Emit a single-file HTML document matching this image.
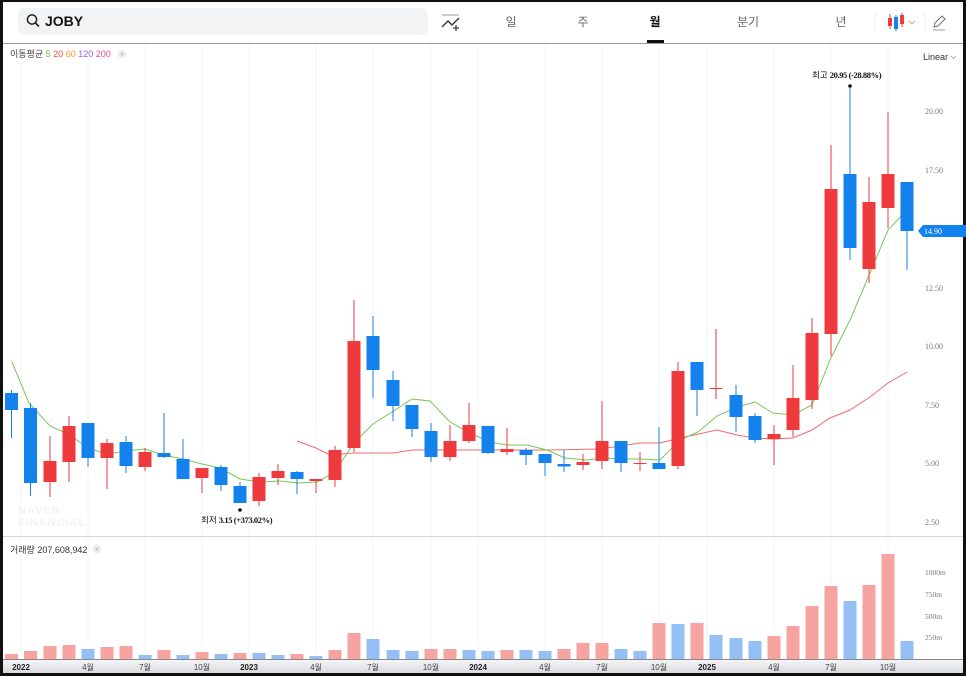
<!DOCTYPE html>
<html><head><meta charset="utf-8">
<style>
html,body{margin:0;padding:0;background:#111;}
body{width:966px;height:676px;overflow:hidden;position:relative;font-family:"Liberation Sans","Noto Sans CJK KR",sans-serif;}
#frame{position:absolute;left:3px;top:2px;width:960px;height:671px;background:#fff;overflow:hidden;}
svg{position:absolute;left:0;top:0;}
</style></head><body>
<div id="frame"></div>
<svg width="966" height="676" viewBox="0 0 966 676" xmlns="http://www.w3.org/2000/svg" font-family="Liberation Sans, Noto Sans CJK KR, sans-serif">
<!-- header -->
<rect x="18" y="8" width="410" height="27" rx="6" fill="#f2f3f5"/>
<circle cx="32" cy="19.5" r="4.6" fill="none" stroke="#222" stroke-width="1.5"/>
<line x1="35.5" y1="23" x2="39" y2="26.5" stroke="#222" stroke-width="1.6"/>
<text x="45" y="26" font-size="14" font-weight="bold" fill="#111">JOBY</text>
<line x1="442" y1="15" x2="459" y2="15" stroke="#999" stroke-width="1"/>
<polyline points="442,27 448,21 452,25 459,18" fill="none" stroke="#333" stroke-width="1.4"/>
<line x1="456" y1="25" x2="456" y2="31" stroke="#333" stroke-width="1.2"/>
<line x1="453" y1="28" x2="459" y2="28" stroke="#333" stroke-width="1.2"/>
<g font-size="12" fill="#666" text-anchor="middle">
<text x="511" y="26">일</text><text x="583" y="26">주</text>
<text x="655" y="26" font-weight="bold" fill="#111">월</text>
<text x="748" y="26">분기</text><text x="841" y="26">년</text></g>
<rect x="647" y="40" width="17" height="3" fill="#111"/>
<line x1="875" y1="12" x2="875" y2="32" stroke="#eee"/>
<line x1="925" y1="12" x2="925" y2="32" stroke="#eee"/>
<line x1="890" y1="14" x2="890" y2="29" stroke="#ef3a3d"/><rect x="888" y="18" width="4" height="8" fill="#ef3a3d"/>
<line x1="896" y1="15" x2="896" y2="31" stroke="#1482ec"/><rect x="894" y="17" width="4" height="12" fill="#1482ec"/>
<line x1="902" y1="13" x2="902" y2="27" stroke="#ef3a3d"/><rect x="900" y="15" width="4" height="9" fill="#ef3a3d"/>
<polyline points="909,21 912,24 915,21" fill="none" stroke="#aaa" stroke-width="0.9"/>
<path d="M934 27 L935 23 L942 16 L945 19 L938 26 Z" fill="none" stroke="#777" stroke-width="1.1"/>
<line x1="933" y1="30" x2="945" y2="30" stroke="#999"/>
<line x1="3" y1="43.5" x2="963" y2="43.5" stroke="#999" stroke-width="1"/>

<!-- grid -->
<g stroke="#f2f3f5" stroke-width="1">
<line x1="21" y1="44" x2="21" y2="660"/><line x1="88" y1="44" x2="88" y2="660"/><line x1="145" y1="44" x2="145" y2="660"/><line x1="202" y1="44" x2="202" y2="660"/><line x1="249" y1="44" x2="249" y2="660"/><line x1="316" y1="44" x2="316" y2="660"/><line x1="373" y1="44" x2="373" y2="660"/><line x1="431" y1="44" x2="431" y2="660"/><line x1="478" y1="44" x2="478" y2="660"/><line x1="545" y1="44" x2="545" y2="660"/><line x1="602" y1="44" x2="602" y2="660"/><line x1="659" y1="44" x2="659" y2="660"/><line x1="707" y1="44" x2="707" y2="660"/><line x1="774" y1="44" x2="774" y2="660"/><line x1="831" y1="44" x2="831" y2="660"/><line x1="888" y1="44" x2="888" y2="660"/>
</g>

<!-- legend -->
<text x="10" y="57" font-size="9" fill="#444">이동평균 <tspan fill="#5cbf3a">5</tspan> <tspan fill="#f04a4a">20</tspan> <tspan fill="#f59a23">60</tspan> <tspan fill="#a05ce0">120</tspan> <tspan fill="#ef4a8a">200</tspan></text>
<circle cx="122" cy="54" r="4.5" fill="#eee"/><text x="122" y="56.5" font-size="7" fill="#aaa" text-anchor="middle">×</text>
<text x="923" y="60" font-size="9" fill="#333">Linear</text>
<polyline points="951,56 953.5,58.5 956,56" fill="none" stroke="#999" stroke-width="0.8"/>

<!-- price axis -->
<g font-size="8" fill="#777" font-family="Liberation Serif, serif">
<text x="925" y="114">20.00</text><text x="925" y="173">17.50</text><text x="925" y="291">12.50</text><text x="925" y="349">10.00</text><text x="925" y="408">7.50</text><text x="925" y="466">5.00</text><text x="925" y="525">2.50</text></g>
<path d="M918 231 L923 225 L966 225 L966 237 L923 237 Z" fill="#1482ec"/>
<text x="924" y="234" font-size="8" fill="#fff" font-family="Liberation Serif, serif">14.90</text>

<!-- watermark -->
<text x="18" y="514" font-size="11" font-weight="bold" fill="#f1f2f4" letter-spacing="1">NAVER</text>
<text x="18" y="526" font-size="11" font-weight="bold" fill="#f1f2f4" letter-spacing="1">FINANCIAL</text>

<!-- MA lines -->
<polyline fill="none" stroke="#f26b6b" stroke-width="1" points="297,441 316,448 330,455 354,453 393,453 412,450 450,450 550,450 600,449 640,443 660,443 680,438 717,430 737,435 755,438 773,439 793,438 812,430 830,418 850,410 870,397 888,383 907,372"/>
<polyline fill="none" stroke="#74c85a" stroke-width="1" points="12,362 29,403 50,426 70,435 88,448 107,454 126,451 145,449 163,455 183,459 202,464 220,468 240,479 260,482 280,481 298,483 317,482 335,472 353,444 373,424 392,412 412,399 430,401 450,422 470,433 490,442 507,445 527,445 547,450 565,458 587,460 603,458 623,459 640,459 660,460 680,440 698,432 717,416 737,407 755,402 773,413 793,415 812,405 830,360 850,320 870,273 888,230 907,210"/>

<!-- candles -->
<g id="c" stroke-width="1"></g>
<g>
<line x1="11.5" y1="390" x2="11.5" y2="438" stroke="#1482ec"/><rect x="5" y="393" width="13" height="17" fill="#1482ec"/>
<line x1="30.5" y1="403" x2="30.5" y2="496" stroke="#1482ec"/><rect x="24" y="408" width="13" height="75" fill="#1482ec"/>
<line x1="50" y1="436" x2="50" y2="497" stroke="#ef3a3d"/><rect x="43.5" y="461" width="13" height="21" fill="#ef3a3d"/>
<line x1="69" y1="416" x2="69" y2="482" stroke="#ef3a3d"/><rect x="62.5" y="426" width="13" height="36" fill="#ef3a3d"/>
<line x1="88" y1="423" x2="88" y2="467" stroke="#1482ec"/><rect x="81.5" y="423" width="13" height="35" fill="#1482ec"/>
<line x1="107" y1="439" x2="107" y2="489" stroke="#ef3a3d"/><rect x="100.5" y="443" width="13" height="15" fill="#ef3a3d"/>
<line x1="126" y1="436" x2="126" y2="473" stroke="#1482ec"/><rect x="119.5" y="442" width="13" height="24" fill="#1482ec"/>
<line x1="145" y1="448" x2="145" y2="471" stroke="#ef3a3d"/><rect x="138.5" y="452" width="13" height="15" fill="#ef3a3d"/>
<line x1="164" y1="413" x2="164" y2="458" stroke="#1482ec"/><rect x="157.5" y="453" width="13" height="4" fill="#1482ec"/>
<line x1="183" y1="439" x2="183" y2="479" stroke="#1482ec"/><rect x="176.5" y="459" width="13" height="20" fill="#1482ec"/>
<line x1="202" y1="468" x2="202" y2="493" stroke="#ef3a3d"/><rect x="195.5" y="468" width="13" height="10" fill="#ef3a3d"/>
<line x1="221" y1="465" x2="221" y2="491" stroke="#1482ec"/><rect x="214.5" y="467" width="13" height="18" fill="#1482ec"/>
<line x1="240" y1="482" x2="240" y2="503" stroke="#1482ec"/><rect x="233.5" y="486" width="13" height="17" fill="#1482ec"/>
<line x1="259" y1="473" x2="259" y2="506" stroke="#ef3a3d"/><rect x="252.5" y="477" width="13" height="24" fill="#ef3a3d"/>
<line x1="278" y1="464" x2="278" y2="485" stroke="#ef3a3d"/><rect x="271.5" y="471" width="13" height="7" fill="#ef3a3d"/>
<line x1="297" y1="471" x2="297" y2="494" stroke="#1482ec"/><rect x="290.5" y="472" width="13" height="7" fill="#1482ec"/>
<line x1="316" y1="479" x2="316" y2="493" stroke="#ef3a3d"/><rect x="309.5" y="479" width="13" height="2" fill="#ef3a3d"/>
<line x1="335" y1="446" x2="335" y2="487" stroke="#ef3a3d"/><rect x="328.5" y="450" width="13" height="30" fill="#ef3a3d"/>
<line x1="354" y1="300" x2="354" y2="452" stroke="#ef3a3d"/><rect x="347.5" y="341" width="13" height="107" fill="#ef3a3d"/>
<line x1="373" y1="316" x2="373" y2="398" stroke="#1482ec"/><rect x="366.5" y="336" width="13" height="34" fill="#1482ec"/>
<line x1="393" y1="371" x2="393" y2="421" stroke="#1482ec"/><rect x="386.5" y="380" width="13" height="26" fill="#1482ec"/>
<line x1="412" y1="405" x2="412" y2="437" stroke="#1482ec"/><rect x="405.5" y="405" width="13" height="24" fill="#1482ec"/>
<line x1="431" y1="423" x2="431" y2="462" stroke="#1482ec"/><rect x="424.5" y="431" width="13" height="26" fill="#1482ec"/>
<line x1="450" y1="425" x2="450" y2="461" stroke="#ef3a3d"/><rect x="443.5" y="441" width="13" height="16" fill="#ef3a3d"/>
<line x1="469" y1="403" x2="469" y2="443" stroke="#ef3a3d"/><rect x="462.5" y="425" width="13" height="16" fill="#ef3a3d"/>
<line x1="488" y1="426" x2="488" y2="454" stroke="#1482ec"/><rect x="481.5" y="426" width="13" height="27" fill="#1482ec"/>
<line x1="507" y1="428" x2="507" y2="455" stroke="#ef3a3d"/><rect x="500.5" y="449" width="13" height="3" fill="#ef3a3d"/>
<line x1="526" y1="448" x2="526" y2="465" stroke="#1482ec"/><rect x="519.5" y="450" width="13" height="5" fill="#1482ec"/>
<line x1="545" y1="454" x2="545" y2="476" stroke="#1482ec"/><rect x="538.5" y="454" width="13" height="9" fill="#1482ec"/>
<line x1="564" y1="450" x2="564" y2="472" stroke="#1482ec"/><rect x="557.5" y="464" width="13" height="2.5" fill="#1482ec"/>
<line x1="583" y1="454" x2="583" y2="470" stroke="#ef3a3d"/><rect x="576.5" y="462" width="13" height="3" fill="#ef3a3d"/>
<line x1="602" y1="401" x2="602" y2="469" stroke="#ef3a3d"/><rect x="595.5" y="441" width="13" height="20" fill="#ef3a3d"/>
<line x1="621" y1="441" x2="621" y2="472" stroke="#1482ec"/><rect x="614.5" y="441" width="13" height="22" fill="#1482ec"/>
<line x1="640" y1="452" x2="640" y2="471" stroke="#ef3a3d"/><rect x="633.5" y="463" width="13" height="1" fill="#ef3a3d"/>
<line x1="659" y1="427" x2="659" y2="469" stroke="#1482ec"/><rect x="652.5" y="463" width="13" height="6" fill="#1482ec"/>
<line x1="678" y1="362" x2="678" y2="469" stroke="#ef3a3d"/><rect x="671.5" y="371" width="13" height="95" fill="#ef3a3d"/>
<line x1="697" y1="362" x2="697" y2="416" stroke="#1482ec"/><rect x="690.5" y="362" width="13" height="28" fill="#1482ec"/>
<line x1="716" y1="329" x2="716" y2="399" stroke="#ef3a3d"/><rect x="709.5" y="388" width="13" height="1" fill="#ef3a3d"/>
<line x1="736" y1="385" x2="736" y2="432" stroke="#1482ec"/><rect x="729.5" y="395" width="13" height="22" fill="#1482ec"/>
<line x1="755" y1="413" x2="755" y2="443" stroke="#1482ec"/><rect x="748.5" y="416" width="13" height="24" fill="#1482ec"/>
<line x1="774" y1="425" x2="774" y2="465" stroke="#ef3a3d"/><rect x="767.5" y="434" width="13" height="5" fill="#ef3a3d"/>
<line x1="793" y1="365" x2="793" y2="437" stroke="#ef3a3d"/><rect x="786.5" y="398" width="13" height="32" fill="#ef3a3d"/>
<line x1="812" y1="318" x2="812" y2="409" stroke="#ef3a3d"/><rect x="805.5" y="333" width="13" height="67" fill="#ef3a3d"/>
<line x1="831" y1="145" x2="831" y2="356" stroke="#ef3a3d"/><rect x="824.5" y="189" width="13" height="145" fill="#ef3a3d"/>
<line x1="850" y1="88" x2="850" y2="260" stroke="#1482ec"/><rect x="843.5" y="174" width="13" height="74" fill="#1482ec"/>
<line x1="869" y1="177" x2="869" y2="283" stroke="#ef3a3d"/><rect x="862.5" y="202" width="13" height="67" fill="#ef3a3d"/>
<line x1="888" y1="112" x2="888" y2="228" stroke="#ef3a3d"/><rect x="881.5" y="174" width="13" height="34" fill="#ef3a3d"/>
<line x1="907" y1="182" x2="907" y2="270" stroke="#1482ec"/><rect x="900.5" y="182" width="13" height="49" fill="#1482ec"/>
</g>

<!-- annotations -->
<circle cx="850" cy="86" r="1.8" fill="#111"/>
<text x="812" y="78" font-size="8.5" fill="#111" font-family="Liberation Serif, Noto Sans CJK KR, serif">최고 <tspan font-weight="bold" letter-spacing="-0.4">20.95 (-28.88%)</tspan></text>
<circle cx="240" cy="510" r="1.8" fill="#111"/>
<text x="201" y="523" font-size="8.5" fill="#111" font-family="Liberation Serif, Noto Sans CJK KR, serif">최저 <tspan font-weight="bold" letter-spacing="-0.4">3.15 (+373.02%)</tspan></text>

<!-- separator -->
<line x1="3" y1="536.5" x2="963" y2="536.5" stroke="#d6d6dc" stroke-width="1"/>
<text x="10" y="553" font-size="9" fill="#333">거래량 207,608,942</text>
<circle cx="97" cy="549" r="4.5" fill="#eee"/><text x="97" y="551.5" font-size="7" fill="#aaa" text-anchor="middle">×</text>

<g font-size="7.5" fill="#777" font-family="Liberation Serif, serif">
<text x="925" y="575">1000m</text><text x="925" y="597">750m</text><text x="925" y="619">500m</text><text x="925" y="640">250m</text></g>

<!-- volume -->
<g>
<rect x="5" y="654" width="13" height="5" fill="#f7a3a2"/>
<rect x="24" y="651" width="13" height="8" fill="#f7a3a2"/>
<rect x="43.5" y="646" width="13" height="13" fill="#f7a3a2"/>
<rect x="62.5" y="645" width="13" height="14" fill="#f7a3a2"/>
<rect x="81.5" y="649" width="13" height="10" fill="#94c0f6"/>
<rect x="100.5" y="647" width="13" height="12" fill="#f7a3a2"/>
<rect x="119.5" y="646" width="13" height="13" fill="#f7a3a2"/>
<rect x="138.5" y="655" width="13" height="4" fill="#94c0f6"/>
<rect x="157.5" y="650" width="13" height="9" fill="#f7a3a2"/>
<rect x="176.5" y="655" width="13" height="4" fill="#94c0f6"/>
<rect x="195.5" y="652" width="13" height="7" fill="#f7a3a2"/>
<rect x="214.5" y="654" width="13" height="5" fill="#94c0f6"/>
<rect x="233.5" y="653" width="13" height="6" fill="#f7a3a2"/>
<rect x="252.5" y="653" width="13" height="6" fill="#94c0f6"/>
<rect x="271.5" y="655" width="13" height="4" fill="#94c0f6"/>
<rect x="290.5" y="654" width="13" height="5" fill="#f7a3a2"/>
<rect x="309.5" y="656" width="13" height="3" fill="#94c0f6"/>
<rect x="328.5" y="650" width="13" height="9" fill="#f7a3a2"/>
<rect x="347.5" y="633" width="13" height="26" fill="#f7a3a2"/>
<rect x="366.5" y="639" width="13" height="20" fill="#94c0f6"/>
<rect x="386.5" y="650" width="13" height="9" fill="#94c0f6"/>
<rect x="405.5" y="651" width="13" height="8" fill="#94c0f6"/>
<rect x="424.5" y="649" width="13" height="10" fill="#f7a3a2"/>
<rect x="443.5" y="649" width="13" height="10" fill="#f7a3a2"/>
<rect x="462.5" y="650" width="13" height="9" fill="#94c0f6"/>
<rect x="481.5" y="651" width="13" height="8" fill="#94c0f6"/>
<rect x="500.5" y="650" width="13" height="9" fill="#f7a3a2"/>
<rect x="519.5" y="650" width="13" height="9" fill="#94c0f6"/>
<rect x="538.5" y="651" width="13" height="8" fill="#94c0f6"/>
<rect x="557.5" y="649" width="13" height="10" fill="#f7a3a2"/>
<rect x="576.5" y="643" width="13" height="16" fill="#f7a3a2"/>
<rect x="595.5" y="643" width="13" height="16" fill="#f7a3a2"/>
<rect x="614.5" y="649" width="13" height="10" fill="#94c0f6"/>
<rect x="633.5" y="651" width="13" height="8" fill="#94c0f6"/>
<rect x="652.5" y="623" width="13" height="36" fill="#f7a3a2"/>
<rect x="671.5" y="624" width="13" height="35" fill="#94c0f6"/>
<rect x="690.5" y="623" width="13" height="36" fill="#f7a3a2"/>
<rect x="709.5" y="635" width="13" height="24" fill="#94c0f6"/>
<rect x="729.5" y="638" width="13" height="21" fill="#94c0f6"/>
<rect x="748.5" y="641" width="13" height="18" fill="#94c0f6"/>
<rect x="767.5" y="636" width="13" height="23" fill="#f7a3a2"/>
<rect x="786.5" y="626" width="13" height="33" fill="#f7a3a2"/>
<rect x="805.5" y="606" width="13" height="53" fill="#f7a3a2"/>
<rect x="824.5" y="586" width="13" height="73" fill="#f7a3a2"/>
<rect x="843.5" y="601" width="13" height="58" fill="#94c0f6"/>
<rect x="862.5" y="585" width="13" height="74" fill="#f7a3a2"/>
<rect x="881.5" y="554" width="13" height="105" fill="#f7a3a2"/>
<rect x="900.5" y="641" width="13" height="18" fill="#94c0f6"/>
</g>

<!-- time axis -->
<defs><linearGradient id="ax" x1="0" y1="0" x2="0" y2="1"><stop offset="0" stop-color="#f5f5f7"/><stop offset="1" stop-color="#d9dade"/></linearGradient></defs>
<rect x="3" y="660" width="960" height="13" fill="url(#ax)"/>
<line x1="3" y1="659.5" x2="963" y2="659.5" stroke="#888"/>
<g font-size="8" fill="#444" text-anchor="middle">
<text x="21" y="670" font-weight="bold" fill="#222">2022</text><text x="88" y="670">4월</text><text x="145" y="670">7월</text><text x="202" y="670">10월</text>
<text x="249" y="670" font-weight="bold" fill="#222">2023</text><text x="316" y="670">4월</text><text x="373" y="670">7월</text><text x="431" y="670">10월</text>
<text x="478" y="670" font-weight="bold" fill="#222">2024</text><text x="545" y="670">4월</text><text x="602" y="670">7월</text><text x="659" y="670">10월</text>
<text x="707" y="670" font-weight="bold" fill="#222">2025</text><text x="774" y="670">4월</text><text x="831" y="670">7월</text><text x="888" y="670">10월</text></g>
</svg>
</body></html>
